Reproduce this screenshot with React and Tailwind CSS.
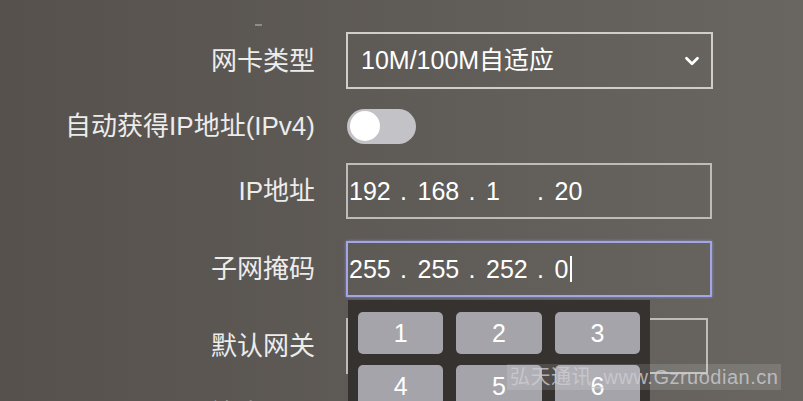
import React from 'react';
import { ChevronDown } from 'lucide-react';

const font = "font-['Liberation_Sans','Noto_Sans_CJK_SC',sans-serif]";

const Label = ({ children }) => (
  <div className={`w-[315px] shrink-0 text-right text-[26px] leading-none text-[#ececec] ${font}`}>
    {children}
  </div>
);

const IpField = ({ values, active, cursor }) => (
  <div
    className={`ml-[31px] flex h-full w-[366px] items-center pl-[1px] border-2 ${
      active ? 'border-[#a3a6e6] shadow-[0_0_3px_rgba(170,170,255,0.6)]' : 'border-[#bdbcb9]'
    }`}
  >
    {values.map((v, i) => (
      <div key={i} className="flex items-center">
        <span className={`text-[25px] leading-none text-white ${i < values.length - 1 ? 'w-[51px]' : ''} ${font}`}>
          {v}
        </span>
        {i < values.length - 1 && (
          <span className={`w-[17.5px] text-[25px] leading-none text-white ${font}`}>.</span>
        )}
        {i === values.length - 1 && cursor && <span className="ml-[2px] h-[26px] w-[2px] bg-white" />}
      </div>
    ))}
  </div>
);

const keys = ['1', '2', '3', '4', '5', '6', '7', '8', '9'];

export default function App() {
  return (
    <div className="relative h-[401px] w-[803px] overflow-hidden bg-gradient-to-r from-[#56514d] via-[#5f5b57] to-[#696661]">
      {/* small mark on top */}
      <div className="absolute left-[255px] top-[24px] h-[2px] w-[7px] bg-[#8f8c88]" />

      <div className="flex flex-col pt-[32px]">
        {/* 网卡类型 */}
        <div className="flex h-[57px] items-center">
          <Label>网卡类型</Label>
          <div className="ml-[31px] flex h-full w-[367px] items-center justify-between border-2 border-[#cfcecb] pl-[13px] pr-[8px]">
            <span className={`text-[25px] leading-none text-white ${font}`}>10M/100M自适应</span>
            <ChevronDown size={22} strokeWidth={3} className="text-white" />
          </div>
        </div>

        {/* 自动获得IP地址 */}
        <div className="flex h-[74px] items-center">
          <Label>自动获得IP地址(IPv4)</Label>
          <div className="ml-[32px] flex h-[35px] w-[69px] items-center rounded-full bg-[#c3c2c7] pl-[3px]">
            <div className="h-[30px] w-[30px] rounded-full bg-white" />
          </div>
        </div>

        {/* IP地址 */}
        <div className="flex h-[56px] items-center">
          <Label>IP地址</Label>
          <IpField values={['192', '168', '1', '20']} />
        </div>

        {/* 子网掩码 */}
        <div className="mt-[22px] flex h-[56px] items-center">
          <Label>子网掩码</Label>
          <IpField values={['255', '255', '252', '0']} active cursor />
        </div>

        {/* 默认网关 */}
        <div className="mt-[21px] flex h-[56px] items-center">
          <Label>默认网关</Label>
          <div className="ml-[31px] h-full w-[362px] border-2 border-[#bdbcb9]" />
        </div>

        {/* 首选DNS */}
        <div className="mt-[12px] flex h-[56px] items-center">
          <Label>首选DNS</Label>
        </div>
      </div>

      {/* numeric keypad */}
      <div className="absolute left-[348px] top-[300px] h-[120px] w-[302px] bg-[#35322f] px-[10px] pt-[12px]">
        <div className="grid grid-cols-3 gap-x-[13px] gap-y-[11px]">
          {keys.map((k) => (
            <div
              key={k}
              className={`flex h-[42px] items-center justify-center rounded-[5px] bg-[#a5a4ab] text-[25px] leading-none text-white ${font}`}
            >
              {k}
            </div>
          ))}
        </div>
      </div>

      {/* watermark */}
      <div
        className={`absolute left-[507px] top-[364px] bg-[rgba(255,255,255,0.13)] px-[3px] py-[1px] text-[20px] leading-[24px] tracking-[0.5px] text-[rgba(205,205,210,0.8)] ${font}`}
      >
        弘天通讯_www.Gzruodian.cn
      </div>
    </div>
  );
}
